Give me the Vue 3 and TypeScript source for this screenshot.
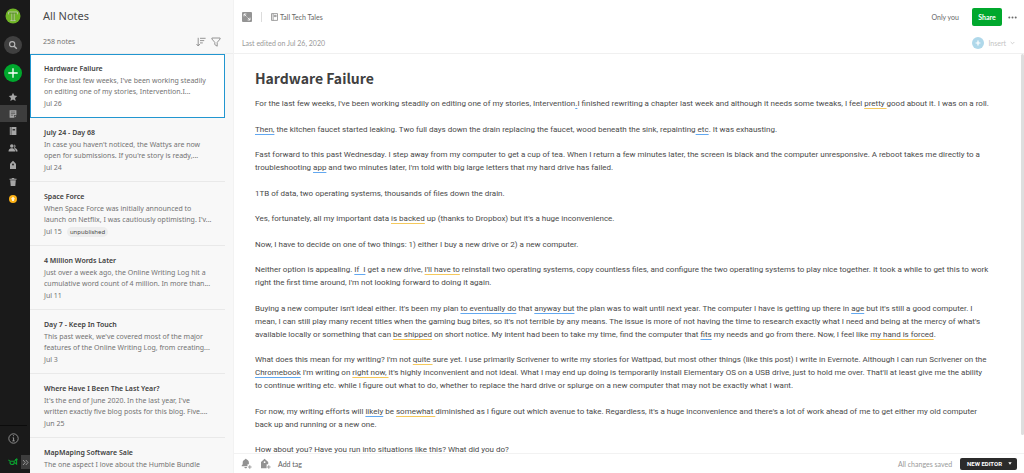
<script setup lang="ts">
import { ref } from 'vue'

interface Note {
  title: string
  lines: string[]
  date?: string
  tag?: string
}
interface Segment {
  text: string
  mark: '' | 'blue' | 'gold'
}

const selected = ref(0)

const notes: Note[] = [
  { title: 'Hardware Failure', lines: ["For the last few weeks, I've been working steadily", 'on editing one of my stories, Intervention.I...'], date: 'Jul 26' },
  { title: 'July 24 - Day 68', lines: ["In case you haven't noticed, the Wattys are now", "open for submissions. If you're story is ready,..."], date: 'Jul 24' },
  { title: 'Space Force', lines: ['When Space Force was initially announced to', "launch on Netflix, I was cautiously optimisting. I'v..."], date: 'Jul 15', tag: 'unpublished' },
  { title: '4 Million Words Later', lines: ['Just over a week ago, the Online Writing Log hit a', 'cumulative word count of 4 million. In more than...'], date: 'Jul 11' },
  { title: 'Day 7 - Keep In Touch', lines: ["This past week, we've covered most of the major", 'features of the Online Writing Log, from creating...'], date: 'Jul 3' },
  { title: 'Where Have I Been The Last Year?', lines: ["It's the end of June 2020. In the last year, I've", 'written exactly five blog posts for this blog. Five....'], date: 'Jun 25' },
  { title: 'MapMaping Software Sale', lines: ['The one aspect I love about the Humble Bundle'] },
]

// [b:...] marks a blue suggestion, [g:...] a gold one
const body: string[][] = [
  ["For the last few weeks, I've been working steadily on editing one of my stories, Intervention[b:.]I finished rewriting a chapter last week and although it needs some tweaks, I feel [g:pretty ]good about it. I was on a roll."],
  ['[b:Then,] the kitchen faucet started leaking. Two full days down the drain replacing the faucet, wood beneath the sink, repainting[b: etc]. It was exhausting.'],
  ['Fast forward to this past Wednesday. I step away from my computer to get a cup of tea. When I return a few minutes later, the screen is black and the computer unresponsive. A reboot takes me directly to a', "troubleshooting [b:app] and two minutes later, I'm told with big large letters that my hard drive has failed."],
  ['1TB of data, two operating systems, thousands of files down the drain.'],
  ["Yes, fortunately, all my important data [g:is backed] up (thanks to Dropbox) but it's a huge inconvenience."],
  ['Now, I have to decide on one of two things: 1) either I buy a new drive or 2) a new computer.'],
  ["Neither option is appealing. [b:If\u00a0 I] get a new drive, [g:I'll have to] reinstall two operating systems, copy countless files, and configure the two operating systems to play nice together. It took a while to get this to work", "right the first time around, I'm not looking forward to doing it again."],
  ["Buying a new computer isn't ideal either. It's been my plan [b:to eventually do] that [b:anyway but] the plan was to wait until next year. The computer I have is getting up there in [b:age] but it's still a good computer. I", "mean, I can still play many recent titles when the gaming bug bites, so it's not terrible by any means. The issue is more of not having the time to research exactly what I need and being at the mercy of what's", 'available locally or something that can [g:be shipped] on short notice. My intent had been to take my time, find the computer that [b:fits] my needs and go from there. Now, I feel like [g:my hand is forced].'],
  ["What does this mean for my writing? I'm not [g:quite ]sure yet. I use primarily Scrivener to write my stories for Wattpad, but most other things (like this post) I write in Evernote. Although I can run Scrivener on the", "[b:Chromebook] I'm writing on [g:right now, ]it's highly inconvenient and not ideal. What I may end up doing is temporarily install Elementary OS on a USB drive, just to hold me over. That'll at least give me the ability", 'to continue writing etc. while I figure out what to do, whether to replace the hard drive or splurge on a new computer that may not be exactly what I want.'],
  ["For now, my writing efforts will [b:likely] be [g:somewhat ]diminished as I figure out which avenue to take. Regardless, it's a huge inconvenience and there's a lot of work ahead of me to get either my old computer", 'back up and running or a new one.'],
  ['How about you? Have you run into situations like this? What did you do?'],
]

function segments(line: string): Segment[] {
  return line
    .split(/(\[[bg]:[^\]]*\])/)
    .filter((part) => part !== '')
    .map((part) => {
      if (part.startsWith('[b:')) return { text: part.slice(3, -1), mark: 'blue' }
      if (part.startsWith('[g:')) return { text: part.slice(3, -1), mark: 'gold' }
      return { text: part, mark: '' }
    })
}
</script>

<template>
  <div class="app">
    <nav class="rail" aria-label="Main">
      <button class="avatar" aria-label="Account">
        <svg width="16" height="16" viewBox="0 0 16 16">
          <circle cx="8" cy="8" r="7.5" fill="#70b526" />
          <path d="M3.6 6.4V4h8.800v2.400M6.900 4.500v8M9.100 4.500v8M5.400 12.600h5.200" fill="none" stroke="#b4c4a0" stroke-width="1" />
          <path d="M4.500 5.200h7M8 5v7.400" fill="none" stroke="#5a8a30" stroke-width=".8" />
        </svg>
      </button>
      <button class="round search" aria-label="Search">
        <svg width="10" height="10" viewBox="0 0 10 10" fill="none" stroke="#b8b8b8"><circle cx="4.2" cy="4.2" r="2.6" stroke-width="1.1" /><path d="M6.2 6.2l2.6 2.6" stroke-width="1.4" /></svg>
      </button>
      <button class="round add" aria-label="New note">
        <svg width="10" height="10" viewBox="0 0 10 10" stroke="#fff" stroke-width="1.3"><path d="M5 .3v9.4M.3 5h9.4" /></svg>
      </button>
      <ul class="nav">
        <li><button aria-label="Shortcuts"><svg viewBox="0 0 10 10"><path d="M5 .8l1.25 2.75 3 .35-2.2 2.05.6 2.95L5 7.4 2.35 8.9l.6-2.95L.75 3.9l3-.35z" /></svg></button></li>
        <li class="on"><button aria-label="Notes"><svg viewBox="0 0 10 10"><path d="M1.6 1.2h6.8v4.9H6.1v2.7H1.6z" /><path d="M6.7 6.7h1.7L6.7 8.7z" /><path d="M2.8 3h4.400M2.800 4.600h4.400M2.800 6.200h2.400" stroke="#3d3d3d" stroke-width=".6" /></svg></button></li>
        <li><button aria-label="Notebooks"><svg viewBox="0 0 10 10"><path d="M1.8 1h1v8h-1zM3.3 1h5.1v8H3.3z" /><path d="M4.6 3.2h2.5v1.2H4.6z" fill="#1a1a1a" /></svg></button></li>
        <li><button aria-label="Shared with me"><svg viewBox="0 0 10 10"><circle cx="3.8" cy="3" r="1.8" /><path d="M.5 8.6c0-2 1-2.9 2.4-3.3h1.8c1.4.4 2.4 1.3 2.4 3.3z" /><path d="M6 1.500a1.700 1.700 0 0 1 .4 3.300c1.800.6 3.200 1.500 3.200 3.800H7.700c0-1.600-.7-2.700-1.800-3.500.6-.8.7-2.400.1-3.600z" /></svg></button></li>
        <li><button aria-label="Tags"><svg viewBox="0 0 10 10"><path d="M5 .7l3 3v5.4H2V3.7z" /><circle cx="5" cy="4.5" r=".9" fill="#1a1a1a" /></svg></button></li>
        <li><button aria-label="Trash"><svg viewBox="0 0 10 10"><path d="M1.5 1.8h2l.5-.9h2l.5.9h2v1h-7zM2.2 3.3h5.6l-.5 5.8H2.7z" /></svg></button></li>
        <li><button aria-label="Upgrade"><svg viewBox="0 0 10 10"><circle cx="5" cy="5" r="4" fill="#fcb116" /><path d="M5 2.6l2.2 2.6H6v1.9H4V5.2H2.8z" fill="#fff4d5" /></svg></button></li>
      </ul>
      <div class="rail-foot">
        <button class="info" aria-label="Information">
          <svg width="11" height="11" viewBox="0 0 11 11" fill="none" stroke="#a6a6a6"><circle cx="5.5" cy="5.5" r="4.7" stroke-width=".8" /><path d="M4.7 4.8h.9v3M4.4 7.9h2.3M5.1 2.7h.9" stroke-width=".9" /></svg>
        </button>
        <div class="foot-row">
          <button class="horn" aria-label="News">
            <svg width="10" height="10" viewBox="0 0 10 10" fill="none" stroke="#0aa32f"><path d="M.4 2.8l1.8 1.5h4.2L8.6 2v5.2L6.400 5.400" stroke-width="1.1" /><path d="M2.200 4.600c-.4 1.600.1 2.900 1.800 2.900s2.400-1 2.200-2.800" stroke-width="1.2" /><path d="M7 2.600h2.600" /></svg>
          </button>
          <button class="expand" aria-label="Expand">
            <svg width="7" height="7" viewBox="0 0 7 7" fill="none" stroke="#a0a0a0" stroke-width=".9"><path d="M1 1l2.2 2.5L1 6M3.8 1L6 3.5 3.8 6" /></svg>
          </button>
        </div>
      </div>
    </nav>

    <aside class="list">
      <header class="list-head">
        <h2>All Notes</h2>
        <div class="list-tools">
          <span>258 notes</span>
          <button aria-label="Sort">
            <svg width="10" height="10" viewBox="0 0 10 10" fill="none" stroke="#8a8a8a" stroke-width=".9"><path d="M2.2.8v8M.5 7l1.7 2 1.7-2M4 1.3h5.6M4 3.6h4.2M4 5.900h2.800" /></svg>
          </button>
          <button aria-label="Filter">
            <svg width="10" height="10" viewBox="0 0 10 10" fill="none" stroke="#8a8a8a" stroke-width=".9"><path d="M.9 1h8.2v1L6.2 5.4v3.8L3.8 7.6V5.4L.9 2z" /></svg>
          </button>
        </div>
      </header>
      <ul class="cards">
        <li v-for="(note, i) in notes" :key="note.title" class="card" :class="{ selected: selected === i }" @click="selected = i">
          <h3>{{ note.title }}</h3>
          <p><template v-for="line in note.lines" :key="line">{{ line }}<br></template></p>
          <div v-if="note.date" class="meta"><time>{{ note.date }}</time><span v-if="note.tag" class="chip">{{ note.tag }}</span></div>
        </li>
      </ul>
    </aside>

    <main class="editor">
      <header class="editor-head">
        <div class="bar">
          <button class="full" aria-label="Full screen">
            <svg width="10" height="10" viewBox="0 0 10 10"><rect width="10" height="10" rx="1" fill="#949494" /><path d="M2 4.400V2h2.400M2 2l2.400 2.400M8 5.600V8H5.600M8 8L5.600 5.600" fill="none" stroke="#fff" stroke-width=".8" /></svg>
          </button>
          <a class="book" href="#">
            <svg width="7" height="8" viewBox="0 0 7 8" fill="none" stroke="#8a8a8a" stroke-width=".8"><path d="M.5.6h6v6.800h-6zM2.100.6v6.800M3.200 2.400h2v1.200h-2z" /></svg>
            Tall Tech Tales
          </a>
          <span class="grow"></span>
          <span class="only">Only you</span>
          <button class="share">Share</button>
          <button class="more" aria-label="More actions">
            <svg width="9" height="3" viewBox="0 0 9 3" fill="#6a6a6a"><circle cx="1.3" cy="1.5" r="1" /><circle cx="4.5" cy="1.5" r="1" /><circle cx="7.7" cy="1.5" r="1" /></svg>
          </button>
        </div>
        <div class="bar second">
          <span class="edited">Last edited on Jul 26, 2020</span>
          <span class="grow"></span>
          <button class="insert">
            <svg width="12" height="12" viewBox="0 0 12 12"><circle cx="6" cy="6" r="6" fill="#afd8ea" /><path d="M6 3.6v4.8M3.6 6h4.8" stroke="#fff" stroke-width="1.2" /></svg>
            Insert
            <svg width="5" height="4" viewBox="0 0 5 4" fill="none" stroke="#c4c4c4" stroke-width=".8"><path d="M.7 1l1.800 1.800L4.300 1" /></svg>
          </button>
        </div>
      </header>
      <div class="page">
        <article class="doc">
          <h1>Hardware Failure</h1>
          <p v-for="(lines, i) in body" :key="i"><template v-for="(line, j) in lines" :key="j"><br v-if="j > 0"><span v-for="(s, k) in segments(line)" :key="k" :class="s.mark">{{ s.text }}</span></template></p>
        </article>
        <div class="thumb"></div>
      </div>
      <footer class="foot">
        <button aria-label="Add reminder">
          <svg width="11" height="12" viewBox="0 0 11 12" fill="#929292"><path d="M4.8.8c.5 0 .8.3.8.8 1.6.4 2.3 1.6 2.3 3.2v1.4H6.5v2H.7V7.400l1-1.200V4.800c0-1.600.8-2.800 2.300-3.200 0-.5.3-.8.8-.8zM3.400 9h2.600c0 .8-.5 1.300-1.300 1.300S3.400 9.800 3.400 9z" /><path d="M8.8 7.200v3.600M7 9h3.600" stroke="#929292" stroke-width=".9" /></svg>
        </button>
        <button class="tagbtn" aria-label="Tag note">
          <svg width="11" height="12" viewBox="0 0 11 12" fill="#929292"><path d="M4.600.8L8.200 4v2.300H6.600v3.900H1V4z" /><circle cx="4.600" cy="4.200" r=".9" fill="#fff" /><path d="M8.800 7.200v3.600M7 9h3.600" stroke="#929292" stroke-width=".9" /></svg>
        </button>
        <button class="addtag">Add tag</button>
        <span class="grow"></span>
        <span class="saved">All changes saved</span>
        <button class="new">NEW EDITOR <svg width="4" height="3" viewBox="0 0 4 3" fill="#fff"><path d="M.3.3h3.400L2 2.700z" /></svg></button>
      </footer>
    </main>
  </div>
</template>

<style>
body {
  margin: 0;
}
</style>

<style scoped>
.app {
  display: flex;
  height: 100vh;
  overflow: hidden;
  background: #fff;
  color: #4a4a4a;
  font-family: "Noto Sans", "Open Sans", sans-serif;
}
button {
  display: flex;
  align-items: center;
  justify-content: center;
  margin: 0;
  padding: 0;
  border: 0;
  background: none;
  color: inherit;
  font: inherit;
  cursor: pointer;
}
svg {
  display: block;
  flex: none;
}
ul {
  margin: 0;
  padding: 0;
  list-style: none;
}
.grow {
  flex: 1;
}

/* left rail */
.rail {
  display: flex;
  flex: none;
  flex-direction: column;
  box-sizing: border-box;
  width: 30px;
  padding-top: 8px;
  background: #1a1a1a;
}
.avatar {
  width: 25px;
  height: 16px;
}
.round {
  width: 18px;
  height: 18px;
  margin-left: 4px;
  border-radius: 50%;
}
.search {
  margin-top: 12px;
  background: #404040;
}
.add {
  margin-top: 10px;
  background: #00a82d;
}
.nav {
  width: 27px;
  margin-top: 6px;
}
.nav button {
  width: 26px;
  height: 17px;
}
.nav svg {
  width: 10px;
  height: 10px;
  fill: #a6a6a6;
}
.nav .on {
  background: #3d3d3d;
}
.rail-foot {
  margin-top: auto;
}
.info {
  width: 27px;
  height: 26px;
  border-top: 1px solid #0c0c0c;
}
.foot-row {
  display: flex;
  height: 22px;
  align-items: center;
  justify-content: flex-end;
}
.horn {
  margin-right: 3px;
}
.expand {
  width: 9px;
  height: 14px;
  background: #3d3d3d;
}

/* note list */
.list {
  display: flex;
  flex: none;
  flex-direction: column;
  box-sizing: border-box;
  width: 204px;
  border-right: 1px solid #f2f2f2;
  background: #f8f8f8;
}
.list-head {
  flex: none;
  box-sizing: border-box;
  height: 54px;
  padding: 8px 12px 0 13px;
  border-bottom: 1px solid #ededed;
}
.list-head h2 {
  margin: 0;
  color: #4a4a4a;
  font-size: 11px;
  font-weight: 400;
  line-height: 16px;
}
.list-tools {
  display: flex;
  align-items: center;
  gap: 5px;
  margin-top: 12px;
  color: #737373;
  font-size: 7px;
  line-height: 12px;
}
.list-tools span {
  flex: 1;
}
.cards {
  flex: 1;
  min-height: 0;
  margin-right: 8px;
  overflow: hidden;
}
.card {
  box-sizing: border-box;
  height: 64px;
  padding: 9px 0 0 14px;
  border-bottom: 1px solid #e9e9e9;
  cursor: pointer;
}
.card.selected {
  padding: 8px 0 0 13px;
  border: 1px solid #2296d0;
  background: #fff;
}
.card h3 {
  margin: 0;
  color: #404040;
  font-size: 7px;
  font-weight: 600;
  line-height: 12px;
}
.card p {
  margin: 0;
  color: #737373;
  font-size: 7px;
  line-height: 11px;
  white-space: nowrap;
}
.meta {
  display: flex;
  align-items: center;
  gap: 5px;
  height: 13px;
  color: #737373;
  font-size: 7px;
  line-height: 10px;
}
.chip {
  padding: 0 3px;
  border-radius: 5px;
  background: #ededed;
  color: #4a4a4a;
  font-size: 6px;
}

/* editor */
.editor {
  display: flex;
  flex: 1;
  flex-direction: column;
  min-width: 0;
  font-family: Lato, "Open Sans", sans-serif;
}
.editor-head {
  flex: none;
  box-sizing: border-box;
  height: 54px;
  padding: 7px 7px 0 8px;
  border-bottom: 1px solid #f0f0f0;
}
.bar {
  display: flex;
  align-items: center;
  height: 20px;
  color: #666;
  font-size: 7px;
  line-height: 12px;
}
.book {
  display: flex;
  align-items: center;
  gap: 2px;
  height: 10px;
  margin-left: 9px;
  padding-left: 9px;
  border-left: 1px solid #dcdcdc;
  color: inherit;
  text-decoration: none;
}
.only {
  margin-right: 13px;
}
.share {
  width: 30px;
  height: 18px;
  border-radius: 2px;
  background: #00a82d;
  color: #fff;
  font-weight: 700;
}
.more {
  margin-left: 6px;
}
.second {
  margin-top: 6px;
}
.edited {
  color: #999;
}
.insert {
  gap: 4px;
  margin-right: 2px;
  color: #c4c4c4;
}
.page {
  display: flex;
  flex: 1;
  min-height: 0;
}
.doc {
  flex: 1;
  min-width: 0;
  padding: 13px 0 0 21px;
  overflow: hidden;
}
.doc h1 {
  margin: 0 0 8px;
  color: #404040;
  font-family: "Noto Sans CJK SC", sans-serif;
  font-size: 14px;
  font-weight: 700;
  line-height: 22px;
}
.doc p {
  margin: 0 0 13px;
  color: #4a4a4a;
  font-family: Roboto, sans-serif;
  font-size: 8px;
  line-height: 13px;
  white-space: nowrap;
}
.doc p:nth-of-type(even) {
  margin-bottom: 12px;
}
.blue,
.gold {
  text-decoration: underline 1px #62a8f0;
  text-decoration-skip-ink: none;
  text-underline-offset: 2px;
  white-space: pre;
}
.gold {
  text-decoration-color: #f5c95c;
}
.thumb {
  flex: none;
  width: 3px;
  margin-bottom: 18px;
  border-radius: 2px;
  background: #dedede;
}
.foot {
  display: flex;
  flex: none;
  align-items: center;
  box-sizing: border-box;
  height: 20px;
  padding: 0 7px;
  border-top: 1px solid #f2f2f2;
  font-size: 7px;
  line-height: 12px;
}
.tagbtn {
  margin-left: 8px;
}
.addtag {
  margin-left: 7px;
  color: #606060;
}
.saved {
  margin-right: 8px;
  color: #999;
}
.new {
  gap: 6px;
  height: 12px;
  padding: 0 5px 0 7px;
  border-radius: 2px;
  background: #2b2b2b;
  color: #fff;
  font-family: Roboto, sans-serif;
  font-size: 6px;
  font-weight: 700;
}
</style>
